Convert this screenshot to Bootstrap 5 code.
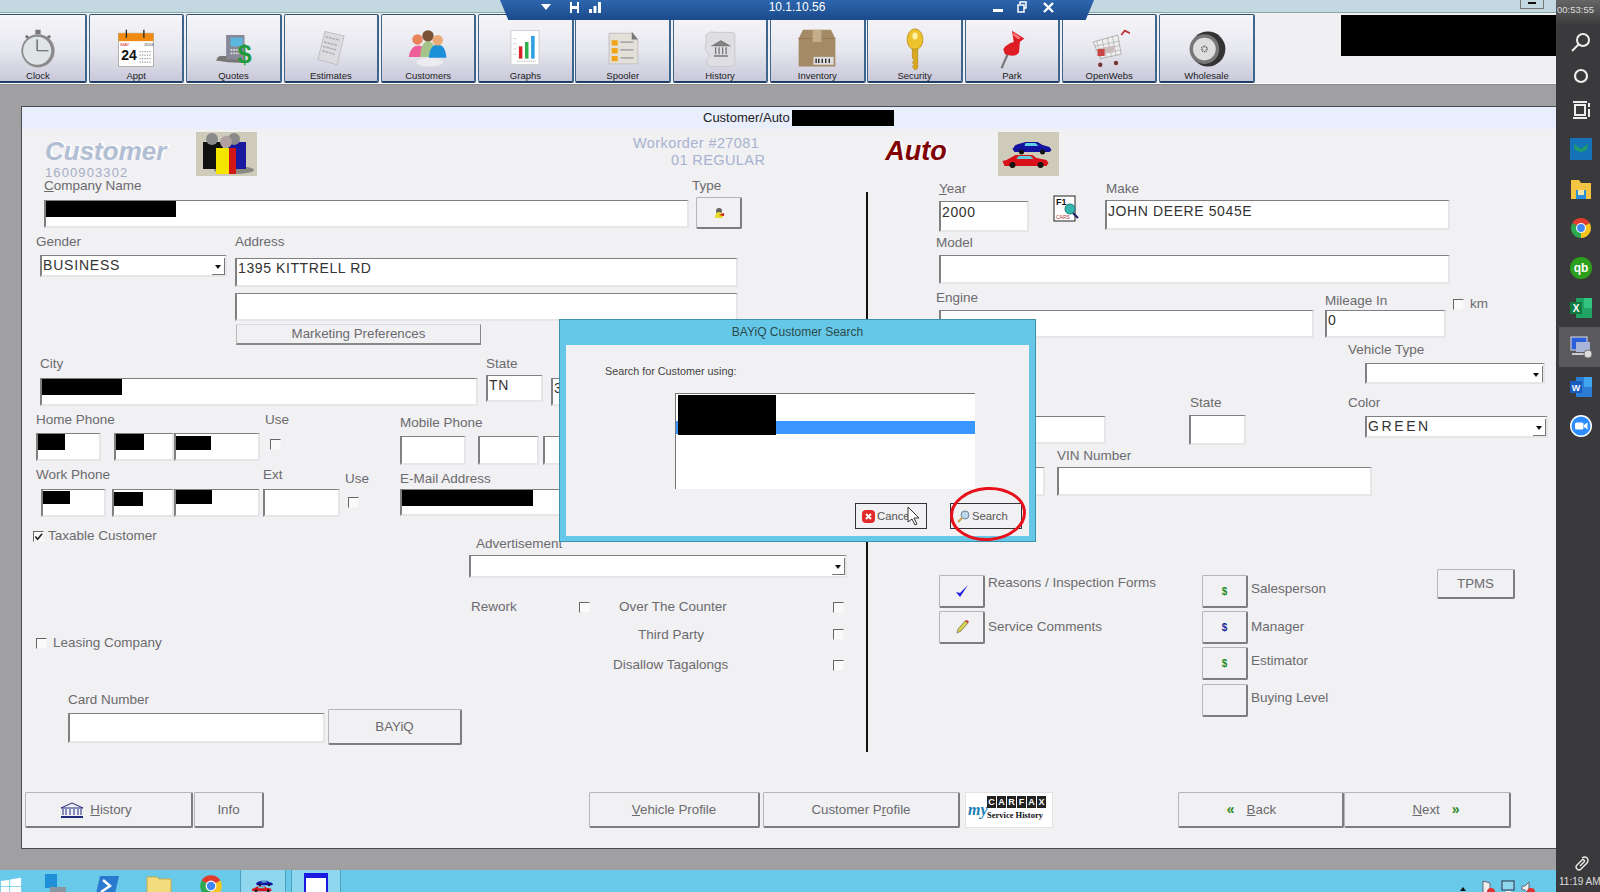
<!DOCTYPE html>
<html lang="en">
<head>
<meta charset="UTF-8">
<title>Customer/Auto</title>
<link href="https://cdn.jsdelivr.net/npm/bootstrap@5.3.0/dist/css/bootstrap.min.css" rel="stylesheet">
<script src="https://cdn.jsdelivr.net/npm/bootstrap@5.3.0/dist/js/bootstrap.bundle.min.js"></script>
<style>
body { margin: 0; background: #a0a0a2; font-family: "Liberation Sans", Arial, sans-serif; }
.screen { width: 1600px; height: 892px; overflow: hidden; position: relative; }
.desk { width: 1556px; height: 892px; background: #a0a0a2; }

/* top of window */
.topstrip { height: 13px; background: #c3d8e0; border-bottom: 1px solid #8aa; }
.min-btn { width: 24px; height: 9px; border: 1px solid #777; border-top: 0; margin-right: 12px; }
.min-btn i { display: block; width: 8px; height: 2px; background: #111; margin: 2px auto 0; }
.toolbar { height: 71px; background: #f0f0f3; border-bottom: 1px solid #fff; gap: 1.8px; box-shadow: 0 1px 0 #8b8b8d; }
.tool { flex: none; width: 95.5px; height: 69px; margin-top: 1px; background: linear-gradient(#f6f6f9, #e6e6ee 55%, #c8c8da); border: 1px solid #c8d0da; border-top-color: #33506f; border-bottom: 2px solid #1f3f66; border-left-color: #3d668f; border-right: 2px solid #3d668f; border-radius: 2px; font-size: 9.500px; color: #222; line-height: 11px; }
.tool:first-child { width: 97px; margin-left: -10px; margin-right: .2px; }
.tool svg { width: 42px; height: 42px; }
.blackbox { width: 215px; height: 41px; background: #000; margin-top: 2px; }

/* main panel */
.panel { margin: 22px 0 21px 21px; height: 743px; background: #f1f0f3; border: 1px solid #4a4a55; border-right: 0; }
.band { height: 22px; background: #e8eefb; font-size: 13px; line-height: 21px; color: #222; padding-left: 681px; }
.band b { display: block; width: 102px; height: 16px; background: #000; margin: 3px 0 0 2px; }
.head { height: 50px; }
.logo-t { font: italic bold 26px/24px "Liberation Sans", sans-serif; white-space: nowrap; text-shadow: 2px -1px 0 #fff; }
.logo-c { color: #b2bed3; }
.logo-a { color: #800000; font-size: 27px; }
.cust-no { font-size: 13px; line-height: 15px; color: #a5afc6; letter-spacing: 1.100px; margin-top: 2px; }
.pic { width: 61px; height: 44px; background: #cfcbba; display: block; }
.wo { font-size: 14.5px; line-height: 17px; color: #a7b3d0; letter-spacing: .4px; white-space: nowrap; }
.body-h { height: 613px; }
.left-col { width: 844px; }
.divider { width: 2px; height: 560px; background: #111; margin-top: 13px; }

/* controls */
.lb { display: block; font-size: 13.5px; line-height: 14px; color: #6b6b6e; white-space: nowrap; flex: none; }
.lb-d { color: #555; }
.fld { display: block; flex: none; padding: 0 1px; background: #fff; border: 2px solid #e6e6e9; border-top-color: #808083; border-left-color: #808083; border-radius: 0; border-top-width: 1px; font-size: 14px; line-height: 19px; letter-spacing: .6px; color: #333; overflow: hidden; }
.sel { display: flex; justify-content: space-between; padding-right: 0; line-height: 18px; letter-spacing: .8px; }
.ls3 { letter-spacing: 2.600px; }
.pt1 { padding-top: 1px; }
.caret { flex: none; width: 13px; height: 17px; margin-top: 2px; border-right: 1px solid #777; border-bottom: 1px solid #777; position: relative; }
.caret::after { content: ""; position: absolute; left: 3px; top: 7px; border: 3px solid transparent; border-top: 4px solid #111; border-bottom: 0; }
.rd { display: block; background: #000; flex: none; }
.cb { display: block; flex: none; width: 11px; height: 11px; background: #fafafa; border: 1px solid #f4f4f4; border-top-color: #666; border-left-color: #666; }
.cb svg { display: block; width: 9px; height: 9px; }
.wbtn { display: flex; flex: none; align-items: center; justify-content: center; gap: 6px; padding: 0; background: #f1f0f3; border: 1px solid #b5b5b8; border-right: 2px solid #7d7d80; border-bottom: 2px solid #7d7d80; border-radius: 2px; font-size: 13.3px; color: #6a6a6d; white-space: nowrap; }
.wbtn.flat { border: 1px solid #ddd; border-right: 1px solid #888; border-bottom: 2px solid #888; border-left: 1px solid #bbb; border-radius: 0; }
.sq { width: 46px; height: 33px; font-size: 10px; font-weight: bold; }
.g { color: #1c8c1c; }
.b { color: #1a2a9c; }
.up1 { margin-bottom: 2px; }
.up3 { margin-bottom: 5px; }
.arrow { color: #2c8a1e; font-weight: bold; font-size: 14px; }
.foot { height: 36px; }
.carfax { width: 88px; height: 36px; background: #fff; border: 1px solid #e2e2e2; padding: 3px 2px 0; overflow: hidden; }
.cf-my { flex: none; width: 19px; font: italic bold 16px/24px "Liberation Serif", serif; color: #1a7fb5; margin-top: 2px; }
.cf-top { gap: 1px; }
.cf-top span { display: block; width: 9px; height: 12px; background: #222; color: #fff; font: bold 9px/12px "Liberation Sans", sans-serif; text-align: center; }
.cf-sub { font: bold 8.500px/10px "Liberation Serif", serif; color: #111; white-space: nowrap; margin-top: 2px; }

/* dialog */
.dlg { position: absolute; left: 559px; top: 319px; width: 477px; height: 223px; background: #66c8e8; border: 1px solid #3c93ad; }
.dlg-title { height: 25px; text-align: center; font-size: 12px; line-height: 24px; color: #2b4a4a; }
.dlg-body { height: 191px; margin: 0 6px; background: #f1f0f3; position: relative; padding: 19px 0 0 39px; }
.dlg-lb { font-size: 10.8px; line-height: 14px; color: #444; }
.listbox { width: 300px; height: 96px; margin: 15px 0 0 70px; background: #fff; border-top: 1px solid #777; border-left: 1px solid #777; position: relative; }
.listbox .bar { height: 13px; margin-top: 27px; background: #3a96ff; }
.listbox .rd { position: absolute; left: 2px; top: 1px; width: 98px; height: 40px; }
.dlg-foot { margin: 14px 0 0 250px; gap: 23px; }
.dbtn { width: 72px; height: 26px; background: #f1f0f3; border: 1px solid #333; border-radius: 0; font-size: 11.3px; color: #555; padding: 0 0 0 6px; gap: 2px; }
.ring { position: absolute; left: 383px; top: 141px; width: 78px; height: 56px; }
.cursor { position: absolute; left: 341px; top: 161px; width: 14px; height: 20px; }

/* remote desktop bar */
.rdp { position: absolute; left: 500px; top: 0; width: 594px; height: 20px; padding: 0 0 6px 41px; background: linear-gradient(#2d66ad, #1b4a8c); clip-path: polygon(0 0, 100% 0, 98.6% 100%, 1.4% 100%); color: #fff; font-size: 12px; line-height: 13px; }
.rdp svg { display: block; flex: none; }
.rdp-ip { width: 60px; margin-left: 166px; text-align: center; flex: none; }

/* taskbar */
.taskbar { height: 22px; background: #68c9e8; overflow: hidden; }
.task { display: flex; justify-content: center; flex: none; width: 52px; padding-top: 3px; }
.task svg { width: 26px; height: 26px; flex: none; }
.task-win { width: 29px; justify-content: flex-start; padding-top: 6px; }
.task-win svg { width: 22px; height: 22px; }
.task-on { background: #8fd7ef; border-left: 1px solid #4a9fbc; border-right: 1px solid #4a9fbc; margin-left: 3px; width: 46px; }
.task-wide { width: 50px; margin-left: 5px; }
.tray { margin-left: auto; padding: 10px 21px 0 0; gap: 6px; }
.tray svg { width: 14px; height: 16px; }
.tray-up { width: 0; height: 0; border: 3px solid transparent; border-bottom: 4px solid #111; border-top: 0; margin: 7px 9px 0 0; }

/* right hand windows bar */
.side { width: 44px; height: 892px; background: #3a3a3c; color: #ddd; }
.side-time { height: 26px; font-size: 9.500px; line-height: 20px; background: linear-gradient(#666, #3a3a3c); padding-left: 1px; white-space: nowrap; }
.side-s { height: 33.5px; padding-left: 13px; }
.side-i { height: 39.6px; padding-left: 13px; }
.side-s svg, .side-i svg { width: 24px; height: 24px; display: block; }
.side-on { background: #5a5a5e; margin-left: 3px; padding-left: 10px; }
.side-gap { height: 3px; flex: none; }
.side-clock { font-size: 10px; line-height: 14px; white-space: nowrap; padding: 3px 0; margin-left: 3px; }
.side-pen { padding-left: 17px; }
.side-pen svg { width: 16px; height: 16px; display: block; }

/* spacing helpers for the form */
.t1{margin-top:1px}.t2{margin-top:2px}.t3{margin-top:3px}.t4{margin-top:4px}.t5{margin-top:5px}.t6{margin-top:6px}.t7{margin-top:7px}.t8{margin-top:8px}.t10{margin-top:10px}.t12{margin-top:12px}.t14{margin-top:14px}.t21{margin-top:21px}.t22{margin-top:22px}.t73{margin-top:73px}.tn5{margin-top:-5px}.tn6{margin-top:-6px}.tn11{margin-top:-11px}.tn13{margin-top:-13px}
.l1{margin-left:1px}.l3{margin-left:3px}.l4{margin-left:4px}.l5{margin-left:5px}.l6{margin-left:6px}.l7{margin-left:7px}.l8{margin-left:8px}.l10{margin-left:10px}.l11{margin-left:11px}.l12{margin-left:12px}.l13{margin-left:13px}.l14{margin-left:14px}.l16{margin-left:16px}.l17{margin-left:17px}.l18{margin-left:18px}.l19{margin-left:19px}.l22{margin-left:22px}.l23{margin-left:23px}.l24{margin-left:24px}.l25{margin-left:25px}.l29{margin-left:29px}.l38{margin-left:38px}.l41{margin-left:41px}.l46{margin-left:46px}.l68{margin-left:68px}.l71{margin-left:71px}.l83{margin-left:83px}.l119{margin-left:119px}.l120{margin-left:120px}.l122{margin-left:122px}.l130{margin-left:130px}.l166{margin-left:166px}.l189{margin-left:189px}.l322{margin-left:322px}.l376{margin-left:376px}.l447{margin-left:447px}.l449{margin-left:449px}.l480{margin-left:480px}.l497{margin-left:497px}.l591{margin-left:591px}
.w46{width:46px}.w55{width:55px}.w57{width:57px}.w60{width:60px}.w61{width:61px}.w62{width:62px}.w65{width:65px}.w66{width:66px}.w77{width:77px}.w78{width:78px}.w82{width:82px}.w86{width:86px}.w90{width:90px}.w108{width:108px}.w121{width:121px}.w134{width:134px}.w135{width:135px}.w151{width:151px}.w158{width:158px}.w167{width:167px}.w180{width:180px}.w183{width:183px}.w187{width:187px}.w190{width:190px}.w195{width:195px}.w199{width:199px}.w214{width:214px}.w220{width:220px}.w227{width:227px}.w229{width:229px}.w235{width:235px}.w245{width:245px}.w257{width:257px}.w263{width:263px}.w315{width:315px}.w345{width:345px}.w375{width:375px}.w378{width:378px}.w389{width:389px}.w438{width:438px}.w446{width:446px}.w503{width:503px}.w511{width:511px}.w585{width:585px}.w645{width:645px}.w648{width:648px}
.h14{height:14px}.h18{height:18px}.h21{height:21px}.h22{height:22px}.h23{height:23px}.h27{height:27px}.h28{height:28px}.h29{height:29px}.h30{height:30px}.h31{height:31px}.h32{height:32px}.h36{height:36px}
.hb168{width:168px;height:36px;padding-right:25px}.hb70{width:70px;height:36px}.vp{width:171px;height:36px}.cp{width:197px;height:36px}.bk{width:166px;height:36px;padding-right:18px}.nx{width:167px;height:36px;padding-left:18px}
.ms-h{margin-left:3px}.ms-i{margin-left:1px}.ms-v{margin-left:325px}.ms-c{margin-left:3px}.ms-f{margin-left:5px}.ms-b{margin-left:125px}
.rc{width:131px;height:17px;margin:-1px 0 0 -2px}.rcity{width:81px;height:17px;margin:-1px 0 0 -2px}.r1{width:28px;height:17px;margin:-1px 0 0 -2px}.r1b{width:28px;height:17px;margin:-1px 0 0 -1px}.r2{width:37px;height:14px;margin:2px 0 0 -3px}.rw1{width:27px;height:13px;margin:1px 0 0 -1px}.rw2{width:29px;height:14px;margin:2px 0 0 -1px}.rw3{width:37px;height:15px;margin:-1px 0 0 -2px}.rm{width:133px;height:21px;margin:-5px 0 0 -3px}
</style>
</head>
<body>
<svg width="0" height="0" class="position-absolute">
  <defs>
    <symbol id="chrome" viewBox="0 0 24 24"><path d="M12 12L3.34 7A10 10 0 0 1 20.66 7Z" fill="#e33b2e"/><path d="M12 12L20.66 7A10 10 0 0 1 12 22Z" fill="#f7c520"/><path d="M12 12L12 22A10 10 0 0 1 3.34 7Z" fill="#2da94f"/><circle cx="12" cy="12" r="5" fill="#fff"/><circle cx="12" cy="12" r="3.9" fill="#4285f4"/></symbol>
    <symbol id="cars" viewBox="0 0 60 44"><path d="M14 17l3-4 10-3h12l5 3 7 2 2 3-2 2H16z" fill="#12129e"/><path d="M27 11h10l3 3H26z" fill="#5fd0e0"/><circle cx="23" cy="20" r="2.5" fill="#111"/><circle cx="44" cy="20" r="2.5" fill="#111"/><path d="M4 29l4-1 9-5h17l4 3 10 2 2 3-2 3H6z" fill="#d8111a"/><path d="M20 24h12l3 3H18z" fill="#5fd0e0"/><circle cx="14" cy="33" r="3" fill="#111"/><circle cx="42" cy="33" r="3" fill="#111"/></symbol>
    <symbol id="temple" viewBox="0 0 24 16"><path d="M1 6L12 1l11 5z" fill="none" stroke="#1f2a7a"/><path d="M3 7v6M6 7v6M18 7v6M21 7v6M10 7v6M14 7v6" stroke="#1f2a7a"/><path d="M1 15h22" stroke="#1f2a7a" stroke-width="2"/></symbol>
  </defs>
</svg>

<div class="screen d-flex">
  <div class="desk d-flex flex-column flex-shrink-0">
    <div class="topstrip d-flex justify-content-end"><div class="min-btn"><i></i></div></div>

    <div class="toolbar d-flex">
      <div class="tool d-flex flex-column align-items-center justify-content-end">
        <svg viewBox="0 0 48 48"><rect x="21" y="2" width="6" height="5" fill="#777"/><path d="M10 9l4 3M38 9l-4 3" stroke="#777" stroke-width="3"/><circle cx="24" cy="26" r="19" fill="#8a8a8a"/><circle cx="23" cy="26" r="16" fill="#dfe5e6"/><path d="M23 26V13M23 26h13" stroke="#555" stroke-width="1.4"/></svg>
        <span>Clock</span>
      </div>
      <div class="tool d-flex flex-column align-items-center justify-content-end">
        <svg viewBox="0 0 48 48"><rect x="4" y="6" width="40" height="38" fill="#fff" stroke="#aaa"/><rect x="4" y="6" width="40" height="9" fill="#f08a12"/><path d="M13 2v9M33 2v9" stroke="#222" stroke-width="1.5"/><text x="6" y="21" font-size="5" fill="#d22" font-family="Liberation Sans">MAY</text><text x="33" y="21" font-size="5" fill="#333" font-family="Liberation Sans">2016</text><text x="7" y="36" font-size="16" font-weight="bold" fill="#111" font-family="Liberation Sans">24</text><path d="M28 27h13M28 31h13M28 35h13M28 39h13" stroke="#999" stroke-dasharray="1.4 1.4" stroke-width="1.4"/></svg>
        <span>Appt</span>
      </div>
      <div class="tool d-flex flex-column align-items-center justify-content-end">
        <svg viewBox="0 0 48 48"><path d="M10 8h6v24H8q-4 2-3 3l-2 2 14 2 18 1V8z" fill="#777"/><rect x="15" y="8" width="21" height="28" fill="#889"/><rect x="20" y="11" width="14" height="10" fill="#5bb7e0"/><path d="M20 25h10M20 29h10" stroke="#ddd" stroke-width="2" stroke-dasharray="2 1"/><text x="28" y="40" font-size="29" font-weight="bold" fill="#1f9a3c" font-family="Liberation Sans">$</text></svg>
        <span>Quotes</span>
      </div>
      <div class="tool d-flex flex-column align-items-center justify-content-end">
        <svg viewBox="0 0 48 48"><path d="M17 4l22 5-8 33-22-6z" fill="#dcdce0" stroke="#bbb"/><path d="M18 10l16 4M16 16l16 4M15 21l15 4M14 26l14 4" stroke="#aaa" stroke-width="1.6" stroke-dasharray="3 1"/></svg>
        <span>Estimates</span>
      </div>
      <div class="tool d-flex flex-column align-items-center justify-content-end">
        <svg viewBox="0 0 48 48"><ellipse cx="26" cy="39" rx="15" ry="5" fill="#ecebf0"/><path d="M2 33q2-13 11-13t11 13z" fill="#ee5f9a"/><circle cx="12" cy="13" r="6" fill="#e8835a"/><path d="M15 33q1-18 9-18t10 18z" fill="#a6c48a"/><circle cx="24" cy="9" r="6.5" fill="#7a5236"/><path d="M25 34q1-15 10-15t10 15z" fill="#1b8fd8"/><circle cx="35" cy="14" r="6" fill="#eaaa78"/></svg>
        <span>Customers</span>
      </div>
      <div class="tool d-flex flex-column align-items-center justify-content-end">
        <svg viewBox="0 0 48 48"><rect x="8" y="3" width="32" height="39" fill="#fff" stroke="#ccc"/><rect x="17" y="21" width="4" height="14" fill="#d8232a"/><rect x="24" y="16" width="4" height="19" fill="#2fb04a"/><rect x="31" y="9" width="4" height="26" fill="#2e9fe0"/><path d="M11 12h3M11 18h3M11 24h3M11 30h3M15 38h21" stroke="#999" stroke-dasharray="1 1"/></svg>
        <span>Graphs</span>
      </div>
      <div class="tool d-flex flex-column align-items-center justify-content-end">
        <svg viewBox="0 0 48 48"><path d="M8 6h26l7 7v28H8z" fill="#e2e0d8" stroke="#bbb"/><path d="M34 4l7 9h-7z" fill="#777"/><rect x="11" y="14" width="7" height="6" fill="#f2a31a"/><rect x="11" y="23" width="7" height="6" fill="#f2a31a"/><rect x="11" y="32" width="7" height="6" fill="#f2a31a"/><path d="M21 16h15M21 25h15M21 34h15" stroke="#aaa" stroke-width="2"/></svg>
        <span>Spooler</span>
      </div>
      <div class="tool d-flex flex-column align-items-center justify-content-end">
        <svg viewBox="0 0 48 48"><path d="M8 8q5-5 10-3h20q4 0 3 6v28q-1 5-6 5H14q-7-2-5-8l4-3q-3-4-6-9 2-8 1-16z" fill="#dfdfe3" stroke="#c5c5ca"/><path d="M16 20l9-5 9 5zM17 32h16M19 22v8M23 22v8M27 22v8M31 22v8" stroke="#777" fill="#888" stroke-width="1.5"/></svg>
        <span>History</span>
      </div>
      <div class="tool d-flex flex-column align-items-center justify-content-end">
        <svg viewBox="0 0 48 48"><path d="M8 2h32l5 10v32H3V12z" fill="#a58a66"/><path d="M3 12h42" stroke="#8d7352"/><path d="M19 2h10v14H19z" fill="#c4ad8a"/><rect x="20" y="33" width="23" height="9" fill="#ddd"/><path d="M23 35v5M26 35v5M30 35v5M34 35v5M38 35v5" stroke="#222" stroke-width="1.5"/></svg>
        <span>Inventory</span>
      </div>
      <div class="tool d-flex flex-column align-items-center justify-content-end">
        <svg viewBox="0 0 48 48"><ellipse cx="24" cy="13" rx="9" ry="12" fill="#eec22c" stroke="#b8901a"/><ellipse cx="24" cy="9" rx="3" ry="4" fill="#fff2a8"/><path d="M21 24h6v22l-3 2-3-4 2-2-2-3 2-2-2-3z" fill="#d8a820" stroke="#b8901a"/></svg>
        <span>Security</span>
      </div>
      <div class="tool d-flex flex-column align-items-center justify-content-end">
        <svg viewBox="0 0 48 48"><path d="M19 30l-7 16" stroke="#777" stroke-width="2.4"/><path d="M24 3l14 9-5 4-1 12q-4 6-16 2l-2-6q4-6 12-8z" fill="#dd1c24"/><path d="M26 5l8 6-3 2-6-5z" fill="#f77"/></svg>
        <span>Park</span>
      </div>
      <div class="tool d-flex flex-column align-items-center justify-content-end">
        <svg viewBox="0 0 48 48"><path d="M6 16l28-8 4 22-24 5z" fill="#eee" stroke="#aaa"/><path d="M10 15l5 20M16 13l5 21M22 11l5 22M28 10l4 21M7 21l29-6M8 26l29-6M10 31l27-6" stroke="#aaa" stroke-width=".8"/><path d="M38 8l4-5 6 3" stroke="#b33" stroke-width="2" fill="none"/><path d="M13 28h16l2-8-18 3z" fill="#cbb" /><rect x="11" y="24" width="8" height="8" fill="#c44"/><circle cx="14" cy="42" r="2.5" fill="#733"/><circle cx="32" cy="40" r="2.5" fill="#733"/></svg>
        <span>OpenWebs</span>
      </div>
      <div class="tool d-flex flex-column align-items-center justify-content-end">
        <svg viewBox="0 0 48 48"><circle cx="25" cy="24" r="20" fill="#333"/><circle cx="21" cy="24" r="17" fill="#777"/><circle cx="21" cy="24" r="13" fill="#dedede"/><circle cx="21" cy="24" r="3" fill="none" stroke="#555" stroke-width="2" stroke-dasharray="1 1"/></svg>
        <span>Wholesale</span>
      </div>
      <div class="blackbox ms-auto"></div>
    </div>

    <div class="panel flex-shrink-0">
      <div class="band d-flex">Customer/Auto<b></b></div>

      <div class="head d-flex">
        <div class="t10 l23 w151">
          <div class="logo-t logo-c">Customer</div>
          <div class="cust-no">1600903302</div>
        </div>
        <svg class="pic t3" viewBox="0 0 61 44"><ellipse cx="38" cy="38" rx="20" ry="4" fill="#8a8a80"/><rect x="7" y="10" width="20" height="27" fill="#111"/><circle cx="16" cy="7" r="6" fill="#8a8a8a"/><rect x="32" y="10" width="18" height="27" fill="#1a1aa0"/><circle cx="38" cy="7" r="6" fill="#8a8a8a"/><rect x="20" y="16" width="20" height="26" fill="#f6e500"/><rect x="33" y="16" width="7" height="26" fill="#d21616"/><circle cx="30" cy="10" r="6" fill="#b0a0a0"/></svg>
        <div class="wo l376 t6">
          <div>Workorder #27081</div>
          <div class="l38">01 REGULAR</div>
        </div>
        <div class="logo-t logo-a l120 t10 w108">Auto</div>
        <svg class="pic t3 l5" viewBox="0 0 60 44"><use href="#cars"/></svg>
      </div>

      <div class="d-flex body-h">
        <div class="left-col flex-shrink-0">
          <div class="d-flex"><span class="lb w648 l22"><u>C</u>ompany Name</span><span class="lb">Type</span></div>
          <div class="d-flex align-items-start t4">
            <div class="fld w645 l22 h28 t3"><span class="rd rc"></span></div>
            <div class="wbtn l7 w46 h32">
              <svg width="12" height="12" viewBox="0 0 12 12"><circle cx="6" cy="4" r="3" fill="#666"/><path d="M2 11q0-6 4-6t4 6z" fill="#e8dc2a"/><path d="M6 8l5-2v3z" fill="#c11"/></svg>
            </div>
          </div>
          <div class="d-flex t6"><span class="lb w199 l14">Gender</span><span class="lb">Address</span></div>
          <div class="d-flex align-items-start t6">
            <div class="fld sel w187 l18 h22"><span>BUSINESS</span><span class="caret"></span></div>
            <div class="w503 l8 t3">
              <div class="fld h29">1395 KITTRELL RD</div>
              <div class="fld h28 t6"></div>
              <button type="button" class="btn wbtn flat w245 h21 t3 l1 lb-d">Marketing Preferences</button>
            </div>
          </div>
          <div class="d-flex t12"><span class="lb w446 l18">City</span><span class="lb">State</span></div>
          <div class="d-flex align-items-start t4">
            <div class="fld w438 l18 h28 t3"><span class="rd rcity"></span></div>
            <div class="fld w57 l8 h27">TN</div>
            <div class="fld w60 l8 h28 t3">3</div>
          </div>
          <div class="d-flex h18 t7"><span class="lb w229 l14">Home Phone</span><span class="lb w135">Use</span><span class="lb t3">Mobile Phone</span></div>
          <div class="d-flex align-items-start t2">
            <div class="fld w65 l14 h28"><span class="rd r1"></span></div>
            <div class="fld w60 l13 h28"><span class="rd r1b"></span></div>
            <div class="fld w86 h28"><span class="rd r2"></span></div>
            <span class="cb l10 t6"></span>
            <div class="fld w66 l119 h29 t3"></div>
            <div class="fld w61 l12 h29 t3"></div>
            <div class="fld w60 l4 h29 t3"></div>
          </div>
          <div class="d-flex h18 t3"><span class="lb w227 l14">Work Phone</span><span class="lb w82">Ext</span><span class="lb w55 t4">Use</span><span class="lb t4">E-Mail Address</span></div>
          <div class="d-flex align-items-start t3">
            <div class="fld w65 l19 h28"><span class="rd rw1"></span></div>
            <div class="fld w62 l6 h28"><span class="rd rw2"></span></div>
            <div class="fld w86 h28"><span class="rd rw3"></span></div>
            <div class="fld w77 l3 h28"></div>
            <span class="cb l8 t8"></span>
            <div class="fld w190 l41 h27"><span class="rd rm"></span></div>
          </div>
          <div class="d-flex align-items-start t12">
            <span class="cb l11 t2"><svg viewBox="0 0 10 10"><path d="M1.500 5l2.500 3 5-6" fill="none" stroke="#222" stroke-width="1.800"/></svg></span>
            <span class="lb l4">Taxable Customer</span>
          </div>
          <div class="d-flex align-items-start tn6">
            <div class="w378 l447">
              <span class="lb l7">Advertisement</span>
              <div class="fld sel h23 t4"><span></span><span class="caret"></span></div>
            </div>
          </div>
          <div class="d-flex align-items-center h14 t22">
            <span class="lb l449 w108">Rework</span><span class="cb"></span>
            <span class="lb w214 l29">Over The Counter</span><span class="cb"></span>
          </div>
          <div class="d-flex align-items-start t14">
            <span class="cb l14 t10"></span>
            <span class="lb l6 w585 t8">Leasing Company</span>
            <span class="lb w195">Third Party</span>
            <span class="cb t1"></span>
          </div>
          <div class="d-flex align-items-center h14 t8">
            <span class="lb l591 w220">Disallow Tagalongs</span><span class="cb"></span>
          </div>
          <div class="d-flex t21"><span class="lb l46">Card Number</span></div>
          <div class="d-flex align-items-start t2">
            <div class="fld w257 l46 h30 t4"></div>
            <button type="button" class="btn wbtn w134 h36 l3">BAYiQ</button>
          </div>
        </div>

        <div class="divider flex-shrink-0"></div>

        <div class="flex-grow-1">
          <div class="d-flex t3"><span class="lb w167 l71"><u>Y</u>ear</span><span class="lb">Make</span></div>
          <div class="d-flex align-items-start t4">
            <div class="fld w90 l71 h31 t1 pt1">2000</div>
            <svg class="l24 tn5" width="27" height="27" viewBox="0 0 27 27"><rect x="1" y="1" width="21" height="25" fill="#fff" stroke="#222"/><text x="3" y="10" font-size="9" font-weight="bold" fill="#111" font-family="Liberation Sans">F1</text><text x="3" y="24" font-size="5" fill="#a33" font-family="Liberation Sans">CARS</text><circle cx="17" cy="14" r="5" fill="#36b6b0" stroke="#1c7c7c"/><path d="M20 18l5 5" stroke="#1a1a66" stroke-width="2"/></svg>
            <div class="fld w345 l25 h30 pt1">JOHN DEERE 5045E</div>
          </div>
          <div class="d-flex t4"><span class="lb l68">Model</span></div>
          <div class="d-flex t5"><div class="fld w511 l71 h29"></div></div>
          <div class="d-flex h18 t7"><span class="lb w389 l68">Engine</span><span class="lb t3">Mileage In</span></div>
          <div class="d-flex align-items-start t1">
            <div class="fld w375 l71 h28"></div>
            <div class="fld w121 l11 h28">0</div>
            <span class="cb l7 tn11"></span>
            <span class="lb l6 tn13">km</span>
          </div>
          <div class="d-flex t5"><span class="lb l480">Vehicle Type</span></div>
          <div class="d-flex t6"><div class="fld sel w180 l497 h21"><span></span><span class="caret"></span></div></div>
          <div class="d-flex t12"><span class="lb w158 l322">State</span><span class="lb">Color</span></div>
          <div class="d-flex align-items-start t5">
            <div class="fld w108 l130 h28 t1"></div>
            <div class="fld w57 l83 h30"></div>
            <div class="fld sel w183 l119 h22 t1"><span class="ls3">GREEN</span><span class="caret"></span></div>
          </div>
          <div class="d-flex t4"><span class="lb l189">VIN Number</span></div>
          <div class="d-flex t4">
            <div class="fld w55 l122 h29"></div>
            <div class="fld w315 l12 h29"></div>
          </div>
          <div class="d-flex align-items-start t73">
            <div class="w263 l71 t6 d-flex flex-column">
              <div class="d-flex align-items-start">
                <div class="wbtn sq"><svg width="16" height="16" viewBox="0 0 16 16"><path d="M2 9l4 5 8-12-8 8z" fill="#1a1ae0"/></svg></div>
                <span class="lb l3 t1">Reasons / Inspection Forms</span>
              </div>
              <div class="d-flex align-items-center t3">
                <div class="wbtn sq"><svg width="14" height="14" viewBox="0 0 14 14"><path d="M2 13l1-4 7-8 3 2-7 8z" fill="#d8d24a" stroke="#555" stroke-width=".6"/><path d="M10 1l3 2 1-1.500-2.500-1.500z" fill="#c33"/></svg></div>
                <span class="lb l3 up1">Service Comments</span>
              </div>
            </div>
            <div class="w235 t6 d-flex flex-column">
              <div class="d-flex align-items-center"><div class="wbtn sq g">$</div><span class="lb l3 up3">Salesperson</span></div>
              <div class="d-flex align-items-center t3"><div class="wbtn sq b">$</div><span class="lb l3 up1">Manager</span></div>
              <div class="d-flex align-items-center t3"><div class="wbtn sq g">$</div><span class="lb l3 up3">Estimator</span></div>
              <div class="d-flex align-items-center t4"><div class="wbtn sq"></div><span class="lb l3 up3">Buying Level</span></div>
            </div>
            <button type="button" class="btn wbtn w78 h30">TPMS</button>
          </div>
        </div>
      </div>

      <div class="d-flex foot">
        <button type="button" class="btn wbtn hb168 ms-h"><svg width="24" height="16" viewBox="0 0 24 16"><use href="#temple"/></svg><span><u>H</u>istory</span></button>
        <button type="button" class="btn wbtn hb70 ms-i">Info</button>
        <button type="button" class="btn wbtn vp ms-v"><span><u>V</u>ehicle Profile</span></button>
        <button type="button" class="btn wbtn cp ms-c"><span>Customer P<u>r</u>ofile</span></button>
        <div class="carfax d-flex ms-f flex-shrink-0">
          <div class="cf-my">my</div>
          <div>
            <div class="d-flex cf-top"><span>C</span><span>A</span><span>R</span><span>F</span><span>A</span><span>X</span></div>
            <div class="cf-sub">Service History</div>
          </div>
        </div>
        <button type="button" class="btn wbtn bk ms-b"><span class="arrow">«</span><span class="l6"><u>B</u>ack</span></button>
        <button type="button" class="btn wbtn nx"><span><u>N</u>ext</span><span class="arrow l6">»</span></button>
      </div>
    </div>

    <div class="taskbar d-flex">
      <div class="task task-win"><svg viewBox="0 0 26 26"><path d="M1 6l10-1.500V12H1zM12 4l13-2v10H12zM1 13h10v8L1 19.500zM12 13h13v11l-13-2z" fill="#fff"/></svg></div>
      <div class="task"><svg viewBox="0 0 26 26"><rect x="3" y="1" width="12" height="14" fill="#1f8fd8"/><rect x="8" y="14" width="16" height="12" fill="#8a95a0"/></svg></div>
      <div class="task"><svg viewBox="0 0 26 26"><path d="M6 3h19l-5 22H1z" fill="#2a7ad0"/><path d="M9 7l7 6-9 6" stroke="#fff" stroke-width="2.500" fill="none"/></svg></div>
      <div class="task"><svg viewBox="0 0 26 26"><path d="M1 4h10l2 2h12v19H1z" fill="#f3dc7e" stroke="#c9a94a"/></svg></div>
      <div class="task"><svg viewBox="0 0 24 24"><use href="#chrome"/></svg></div>
      <div class="task task-on"><svg viewBox="0 0 60 44"><use href="#cars"/></svg></div>
      <div class="task task-on task-wide"><svg viewBox="0 0 26 26"><rect x="2" y="1" width="22" height="24" fill="#fff" stroke="#1a1ae0" stroke-width="2"/><rect x="2" y="1" width="22" height="4" fill="#1a1ae0"/></svg></div>
      <div class="tray d-flex">
        <span class="tray-up"></span>
        <svg viewBox="0 0 14 16"><path d="M2 1l7 2v12H2z" fill="#eee" stroke="#667"/><circle cx="10" cy="12" r="4" fill="#d33"/></svg>
        <svg viewBox="0 0 14 16"><rect x="1" y="1" width="12" height="9" fill="#8fd7ef" stroke="#334"/><rect x="5" y="11" width="5" height="5" fill="#fff"/></svg>
        <svg viewBox="0 0 14 16"><path d="M1 6h3l4-4v12l-4-4H1z" fill="#eee" stroke="#667"/><circle cx="10" cy="12" r="4" fill="#d33"/></svg>
      </div>
    </div>
  </div>

  <div class="side d-flex flex-column flex-shrink-0">
    <div class="side-time">00:53:55</div>
    <div class="side-s d-flex align-items-center"><svg viewBox="0 0 24 24"><circle cx="14" cy="9" r="6" fill="none" stroke="#eee" stroke-width="2"/><path d="M10 13l-7 7" stroke="#eee" stroke-width="2"/></svg></div>
    <div class="side-s d-flex align-items-center"><svg viewBox="0 0 24 24"><circle cx="12" cy="12" r="6" fill="none" stroke="#eee" stroke-width="2.200"/></svg></div>
    <div class="side-s d-flex align-items-center"><svg viewBox="0 0 24 24"><rect x="6" y="7" width="10" height="10" fill="none" stroke="#eee" stroke-width="2"/><path d="M4 4h14M4 20h14M20 5v4M20 11v8" stroke="#eee" stroke-width="2"/></svg></div>
    <div class="side-gap"></div>
    <div class="side-i d-flex align-items-center"><svg viewBox="0 0 24 24"><rect x="1" y="1" width="22" height="22" fill="#1572b8"/><path d="M12 12L5 7l1 6 6 2 6-2 1-6z" fill="#1f9c6a"/></svg></div>
    <div class="side-i d-flex align-items-center"><svg viewBox="0 0 24 24"><path d="M2 3h8l2 3h10v16H2z" fill="#f5c443"/><rect x="7" y="13" width="10" height="9" fill="#2b8fdc"/><rect x="9" y="13" width="6" height="5" fill="#f5e6a8"/></svg></div>
    <div class="side-i d-flex align-items-center"><svg viewBox="0 0 24 24"><use href="#chrome"/></svg></div>
    <div class="side-i d-flex align-items-center"><svg viewBox="0 0 24 24"><circle cx="12" cy="12" r="11" fill="#2ca01c"/><text x="12" y="16" font-size="12" font-weight="bold" fill="#fff" text-anchor="middle" font-family="Liberation Sans">qb</text></svg></div>
    <div class="side-i d-flex align-items-center"><svg viewBox="0 0 24 24"><rect x="7" y="2" width="16" height="20" fill="#21a366"/><rect x="15" y="2" width="8" height="10" fill="#33c481"/><rect x="1" y="6" width="12" height="12" fill="#107c41"/><text x="7" y="16" font-size="10" font-weight="bold" fill="#fff" text-anchor="middle" font-family="Liberation Sans">X</text></svg></div>
    <div class="side-i side-on d-flex align-items-center"><svg viewBox="0 0 24 24"><rect x="2" y="2" width="16" height="13" fill="#2b5fd9" stroke="#ddd"/><rect x="7" y="7" width="14" height="10" fill="#aab4d8"/><path d="M3 18h14l2 2H3z" fill="#ccc"/><circle cx="19" cy="19" r="4" fill="#ddd" stroke="#777"/></svg></div>
    <div class="side-i d-flex align-items-center"><svg viewBox="0 0 24 24"><rect x="7" y="2" width="16" height="20" fill="#2b7cd3"/><rect x="15" y="2" width="8" height="10" fill="#41a5ee"/><rect x="1" y="6" width="12" height="12" fill="#185abd"/><text x="7" y="16" font-size="9" font-weight="bold" fill="#fff" text-anchor="middle" font-family="Liberation Sans">W</text></svg></div>
    <div class="side-i d-flex align-items-center"><svg viewBox="0 0 24 24"><circle cx="12" cy="12" r="11" fill="#fff"/><circle cx="12" cy="12" r="9.500" fill="#2d8cff"/><rect x="6" y="8.500" width="8.500" height="7" rx="1.500" fill="#fff"/><path d="M15 11l3.500-2.500v7L15 13z" fill="#fff"/></svg></div>
    <div class="side-pen mt-auto"><svg viewBox="0 0 16 16"><path d="M9 2q3-2 5 0t0 5l-6 6q-2 2-4 0t0-4l5-5q1-1 2 0t0 2l-4 4" fill="none" stroke="#eee" stroke-width="1.400"/></svg></div>
    <div class="side-clock">11:19 AM</div>
  </div>

  <div class="rdp d-flex align-items-center">
    <svg width="10" height="6" viewBox="0 0 10 6"><path d="M0 0h10L5 6z" fill="#fff"/></svg>
    <svg class="l17" width="13" height="11" viewBox="0 0 13 11"><path d="M2 0h2v11H2zM9 0h2v11H9zM4 4h5v3H4z" fill="#fff"/></svg>
    <svg class="l8" width="12" height="11" viewBox="0 0 12 11"><path d="M0 7h3v4H0zM4.500 4h3v7h-3zM9 0h3v11H9z" fill="#fff"/></svg>
    <span class="rdp-ip">10.1.10.56</span>
    <svg class="l166 t6" width="10" height="3" viewBox="0 0 10 3"><rect width="10" height="3" fill="#fff"/></svg>
    <svg class="l14" width="10" height="12" viewBox="0 0 10 12"><path d="M3 3V1h6v6H7M1 4h6v7H1z" fill="none" stroke="#fff" stroke-width="1.500"/></svg>
    <svg class="l16" width="11" height="11" viewBox="0 0 11 11"><path d="M1 1l9 9M10 1l-9 9" stroke="#fff" stroke-width="2.400"/></svg>
  </div>

  <div class="dlg">
    <div class="dlg-title">BAYiQ Customer Search</div>
    <div class="dlg-body">
      <div class="dlg-lb">Search for Customer using:</div>
      <div class="listbox"><div class="bar"></div><span class="rd"></span></div>
      <div class="d-flex dlg-foot">
        <button type="button" class="btn dbtn d-flex align-items-center"><svg width="13" height="13" viewBox="0 0 13 13"><rect width="13" height="13" rx="4" fill="#e22a2a"/><path d="M4 4l5 5M9 4l-5 5" stroke="#fff" stroke-width="2"/></svg>Cancel</button>
        <button type="button" class="btn dbtn d-flex align-items-center"><svg width="13" height="13" viewBox="0 0 13 13"><circle cx="8" cy="5" r="4" fill="#bcd6ea" stroke="#6a86a0"/><path d="M5 8l-4 4" stroke="#c9a24a" stroke-width="2"/></svg>Search</button>
      </div>
      <svg class="ring" viewBox="0 0 78 56"><ellipse cx="39" cy="28" rx="36.500" ry="25.500" fill="none" stroke="#e8101a" stroke-width="3" transform="rotate(-4 39 28)"/></svg>
      <svg class="cursor" viewBox="0 0 14 20"><path d="M1 1v15l4-3 3 6 2-1-3-6h5z" fill="#fff" stroke="#333"/></svg>
    </div>
  </div>
</div>
</body>
</html>
